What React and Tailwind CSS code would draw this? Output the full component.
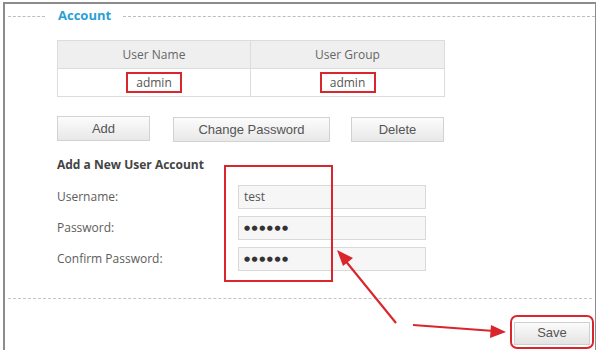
import React from "react";

const red = "border-[#d9252c]";

function Btn({ label, w }) {
  return (
    <button
      className={`${w} h-[25px] border border-[#d2d2d2] bg-gradient-to-b from-[#fcfcfc] to-[#e8e8e8] text-[13px] text-[#555] font-['Liberation_Sans',Arial,sans-serif]`}
    >
      {label}
    </button>
  );
}

function Field({ label, value, dots }) {
  return (
    <div className="flex items-center h-[24px]">
      <div className="w-[181px] text-[12px] text-[#5c5c5c]">{label}</div>
      <div className="w-[188px] h-[24px] border border-[#d9d9d9] bg-[#f6f6f6] flex items-center px-[5px]">
        {dots ? (
          <span className="text-[#333] text-[7px] tracking-[1.5px] font-['DejaVu_Sans',sans-serif]">●●●●●●</span>
        ) : (
          <span className="text-[12px] text-[#555]">{value}</span>
        )}
      </div>
    </div>
  );
}

export default function App() {
  return (
    <div className="relative w-[600px] h-[350px] bg-white overflow-hidden font-['Open_Sans',sans-serif]">
      <div className="h-full pt-[2px] pl-[3px] pr-[4px]">
        <div className="h-full border-t-2 border-l-2 border-r border-[#8c8c8c] flex flex-col">
          {/* legend */}
          <div className="h-[24px] flex items-center">
            <div className="ml-[3px] w-[37px] border-t border-dashed border-[#bdbdbd]" />
            <div className="ml-[13px] text-[13px] font-bold text-[#2a9fd6]">Account</div>
            <div className="ml-[12px] flex-1 border-t border-dashed border-[#bdbdbd]" />
          </div>

          <div className="pl-[52px]">
            {/* table */}
            <div className="mt-[12px] w-[388px] border border-[#dcdcdc]">
              <div className="flex h-[27px] bg-[#efefef] text-[12px] text-[#666]">
                <div className="w-[193px] flex items-center justify-center border-r border-[#dcdcdc]">User Name</div>
                <div className="flex-1 flex items-center justify-center">User Group</div>
              </div>
              <div className="flex h-[28px] border-t border-[#dcdcdc] text-[12px] text-[#555]">
                <div className="w-[193px] flex items-center justify-center border-r border-[#dcdcdc]">
                  <span className={`w-[56px] h-[21px] border-2 ${red} flex items-center justify-center`}>admin</span>
                </div>
                <div className="flex-1 flex items-center justify-center">
                  <span className={`w-[56px] h-[21px] border-2 ${red} flex items-center justify-center`}>admin</span>
                </div>
              </div>
            </div>

            {/* buttons */}
            <div className="mt-[19px] flex">
              <Btn label="Add" w="w-[93px]" />
              <div className="ml-[23px]">
                <Btn label="Change Password" w="w-[157px]" />
              </div>
              <div className="ml-[21px]">
                <Btn label="Delete" w="w-[93px]" />
              </div>
            </div>

            <div className="mt-[15px] h-[16px] flex items-center text-[12px] font-bold text-[#444]">
              Add a New User Account
            </div>

            <div className="mt-[12px] flex flex-col gap-[7px]">
              <Field label="Username:" value="test" />
              <Field label="Password:" dots />
              <Field label="Confirm Password:" dots />
            </div>
          </div>

          <div className="mt-[27px] mx-[3px] border-t border-dashed border-[#c4c4c4]" />

          <div className="mt-[16px] flex justify-end pr-[1px]">
            <div className={`border-2 ${red} rounded-[7px] p-[2px]`}>
              <button className="w-[76px] h-[23px] border border-[#cfcfcf] bg-gradient-to-b from-[#fbfbfb] to-[#e4e4e4] text-[13px] text-[#555] font-['Liberation_Sans',Arial,sans-serif]">
                Save
              </button>
            </div>
          </div>
        </div>
      </div>

      {/* annotations */}
      <div className={`absolute left-[224px] top-[165px] w-[109px] h-[117px] border-2 ${red}`} />
      <svg className="absolute inset-0" width="600" height="350" viewBox="0 0 600 350">
        <line x1="396" y1="323" x2="344" y2="259" stroke="#d9252c" strokeWidth="2.2" />
        <polygon points="337,250 353,258 343,266" fill="#d9252c" />
        <line x1="413" y1="325" x2="494" y2="331" stroke="#d9252c" strokeWidth="2.2" />
        <polygon points="506,332 491,325 490,338" fill="#d9252c" />
      </svg>
    </div>
  );
}
